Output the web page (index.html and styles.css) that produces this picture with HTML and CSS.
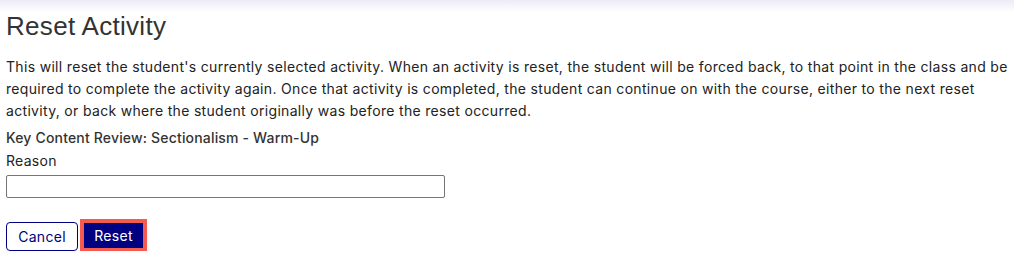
FILE: index.html
```html
<!DOCTYPE html>
<html>
<head>
<meta charset="utf-8">
<link rel="stylesheet" href="styles.css">
</head>
<body>
<div class="topshade"></div>
<main class="dialog">
  <h1 class="title">Reset Activity</h1>
  <p class="desc">This will reset the student's currently selected activity. When an activity is reset, the student will be forced back, to that point in the class and be required to complete the activity again. Once that activity is completed, the student can continue on with the course, either to the next reset activity, or back where the student originally was before the reset occurred.</p>
  <div class="activity">Key Content Review: Sectionalism - Warm-Up</div>
  <label class="label" for="reason">Reason</label>
  <input class="input" id="reason" type="text">
  <div class="actions">
    <button class="btn btn-outline">Cancel</button>
    <button class="btn btn-primary">Reset</button>
  </div>
</main>
</body>
</html>
```

FILE: styles.css
```css
html, body {
  margin: 0;
  padding: 0;
  background: #fff;
}
body {
  font-family: Inter, "Noto Sans", sans-serif;
  color: #333;
  position: relative;
}
.topshade {
  position: absolute;
  left: 0;
  right: 0;
  top: 0;
  height: 12px;
  background: linear-gradient(to bottom, #ecebf7, rgba(255,255,255,0));
}
.dialog {
  padding: 11px 6px 0 6px;
  display: flex;
  flex-direction: column;
  align-items: flex-start;
}
.title {
  margin: 0;
  font-family: "Liberation Sans", Arial, sans-serif;
  font-size: 26px;
  font-weight: 400;
  line-height: 30px;
  letter-spacing: 0.3px;
  color: #333;
}
.desc {
  margin: 15px 0 0 0;
  font-size: 14px;
  line-height: 22px;
  letter-spacing: 0.32px;
  color: #222;
  max-width: 1002px;
}
.activity {
  margin-top: 6px;
  font-size: 14px;
  font-weight: 500;
  line-height: 20px;
  letter-spacing: 0.17px;
  color: #333;
}
.label {
  margin-top: 3px;
  font-size: 14px;
  line-height: 20px;
  letter-spacing: 0.3px;
  color: #222;
}
.input {
  margin-top: 4px;
  width: 439px;
  height: 23px;
  box-sizing: border-box;
  border: 1px solid #767676;
  border-radius: 2px;
  padding: 0 4px;
  font-family: inherit;
}
.actions {
  margin-top: 24px;
  display: flex;
  align-items: center;
}
.btn {
  font-family: inherit;
  font-size: 14px;
  letter-spacing: 0.3px;
  box-sizing: border-box;
  cursor: pointer;
}
.btn-outline {
  width: 72px;
  height: 29px;
  padding: 0;
  background: #fff;
  color: #000080;
  border: 1px solid #000080;
  border-radius: 4px;
}
.btn-primary {
  width: 59px;
  height: 25px;
  padding: 0;
  margin-left: 6px;
  margin-top: -2px;
  background: #000080;
  color: #fff;
  border: none;
  border-radius: 0;
  outline: 4px solid #f45a4f;
  box-shadow: 0 5px 7px rgba(0,0,0,0.3);
}
```
